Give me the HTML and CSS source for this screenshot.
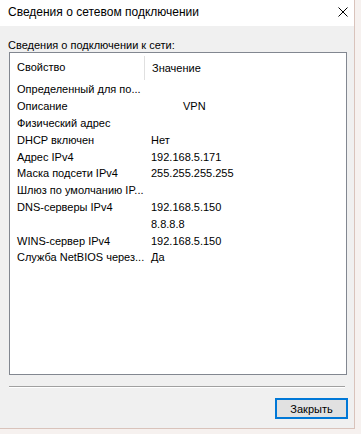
FILE: index.html
```html
<!DOCTYPE html>
<html lang="ru">
<head>
  <meta charset="UTF-8">
  <title>Сведения о сетевом подключении</title>
  <link rel="stylesheet" href="styles.css">
</head>
<body>
<div class="window">
  <div class="titlebar">
    <span class="title">Сведения о сетевом подключении</span>
    <svg class="close" width="10" height="10" viewBox="0 0 10 10">
      <path d="M0.5 0.5 L9.5 9.5 M9.5 0.5 L0.5 9.5" stroke="#000" stroke-width="1" fill="none"/>
    </svg>
  </div>
  <div class="content">
    <div class="caption">Сведения о подключении к сети:</div>
    <div class="list">
      <div class="list-head">
        <div class="col-name">Свойство</div>
        <div class="col-value head-value">Значение</div>
      </div>
      <div class="row"><div class="col-name">Определенный для по...</div><div class="col-value"></div></div>
      <div class="row"><div class="col-name">Описание</div><div class="col-value vpn">VPN</div></div>
      <div class="row"><div class="col-name">Физический адрес</div><div class="col-value"></div></div>
      <div class="row"><div class="col-name">DHCP включен</div><div class="col-value">Нет</div></div>
      <div class="row"><div class="col-name">Адрес IPv4</div><div class="col-value">192.168.5.171</div></div>
      <div class="row"><div class="col-name">Маска подсети IPv4</div><div class="col-value">255.255.255.255</div></div>
      <div class="row"><div class="col-name">Шлюз по умолчанию IP...</div><div class="col-value"></div></div>
      <div class="row"><div class="col-name">DNS-серверы IPv4</div><div class="col-value">192.168.5.150</div></div>
      <div class="row"><div class="col-name"></div><div class="col-value">8.8.8.8</div></div>
      <div class="row"><div class="col-name">WINS-сервер IPv4</div><div class="col-value">192.168.5.150</div></div>
      <div class="row"><div class="col-name">Служба NetBIOS через...</div><div class="col-value">Да</div></div>
    </div>
    <div class="divider"></div>
    <div class="actions">
      <button type="button" class="btn">Закрыть</button>
    </div>
  </div>
</div>
</body>
</html>
```

FILE: styles.css
```css
body {
  margin: 0;
  background-color: #f6f1ef;
  font-family: 'Liberation Sans', Arial, sans-serif;
  font-size: 11px;
  color: #000;
  width: 361px;
  height: 434px;
  overflow: hidden;
}
.window {
  width: 354px;
  height: 428px;
  border-right: 1px solid #d9c3bb;
  border-bottom: 1px solid #d9c3bb;
  background-color: #f0f0f0;
  display: flex;
  flex-direction: column;
}
.titlebar {
  height: 26px;
  background-color: #fff;
  display: flex;
  align-items: center;
  justify-content: space-between;
  padding: 0 6px 3px 8px;
  box-sizing: border-box;
}
.title {
  font-size: 12px;
}
.content {
  flex: 1;
  padding: 12px 7px 0 9px;
}
.caption {
  margin-left: -1px;
  height: 14px;
  line-height: 14px;
}
.list {
  width: 338px;
  height: 323px;
  box-sizing: border-box;
  border: 1px solid #828790;
  background-color: #fff;
}
.list-head {
  display: flex;
  height: 28px;
  align-items: center;
}
.row {
  display: flex;
  height: 16.8px;
  align-items: center;
}
.col-name {
  width: 127px;
  padding-left: 7px;
  white-space: nowrap;
}
.col-value {
  padding-left: 7px;
  white-space: nowrap;
}
.head-value {
  border-left: 1px solid #e0e0e0;
  height: 24px;
  line-height: 24px;
  margin-top: 2px;
}
.vpn {
  padding-left: 39px;
}
.divider {
  margin-top: 11px;
  width: 336px;
  border-top: 1px solid #a0a0a0;
  border-bottom: 1px solid #fff;
}
.actions {
  display: flex;
  justify-content: flex-end;
  margin-top: 10px;
}
.btn {
  width: 73px;
  height: 21px;
  margin-right: -1px;
  background-color: #e1e1e1;
  border: 2px solid #0078d7;
  font-family: 'Liberation Sans', Arial, sans-serif;
  font-size: 11px;
  color: #000;
  padding: 0;
}
```
